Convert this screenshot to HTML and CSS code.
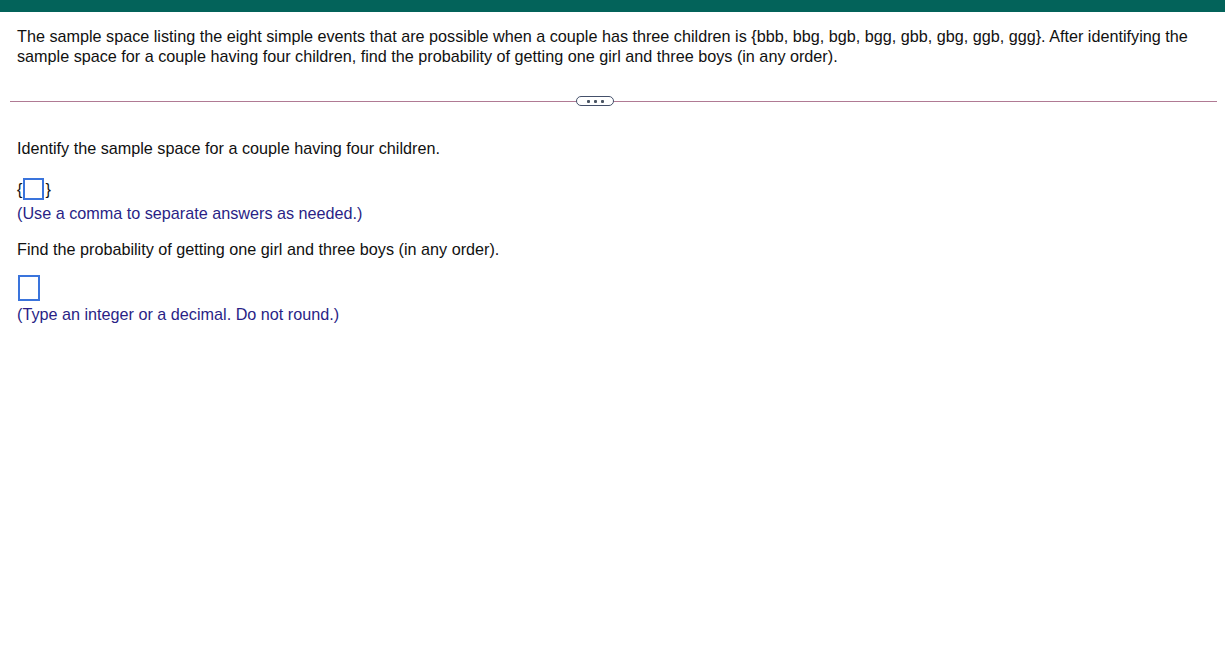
FILE: index.html
```html
<!DOCTYPE html>
<html>
<head>
<meta charset="utf-8">
<link rel="stylesheet" href="styles.css">
</head>
<body>
<div class="topbar"></div>
<div class="question">
  <p class="stem">The sample space listing the eight simple events that are possible when a couple has three children is {bbb, bbg, bgb, bgg, gbb, gbg, ggb, ggg}. After identifying the sample space for a couple having four children, find the probability of getting one girl and three boys (in any order).</p>
</div>
<div class="divider">
  <span class="pill"><span class="dot"></span><span class="dot"></span><span class="dot"></span></span>
</div>
<div class="parts">
  <p class="prompt">Identify the sample space for a couple having four children.</p>
  <div class="answer-row"><span class="brace">{</span><span class="box box-small"></span><span class="brace">}</span></div>
  <p class="hint">(Use a comma to separate answers as needed.)</p>
  <p class="prompt prompt-2">Find the probability of getting one girl and three boys (in any order).</p>
  <div class="answer-row answer-row-2"><span class="box box-tall"></span></div>
  <p class="hint">(Type an integer or a decimal. Do not round.)</p>
</div>
</body>
</html>
```

FILE: styles.css
```css
html, body {
  margin: 0;
  padding: 0;
  background: #ffffff;
}
body {
  font-family: "Liberation Sans", Arial, sans-serif;
  font-size: 16.2px;
  line-height: 20px;
  color: #111111;
}
p { margin: 0; }
.topbar {
  height: 12px;
  background: #03635a;
}
.question {
  padding: 14px 17px 0 17px;
}
.divider {
  position: relative;
  margin: 35px 8px 0 10px;
  height: 1px;
  background: #b07a94;
}
.pill {
  position: absolute;
  left: 566px;
  top: -5px;
  width: 36px;
  height: 8px;
  border: 1.5px solid #44506a;
  border-radius: 6px;
  background: #ffffff;
  display: flex;
  align-items: center;
  justify-content: center;
  gap: 4px;
}
.dot {
  width: 3px;
  height: 3px;
  background: #4a5563;
  border-radius: 1px;
}
.parts {
  padding: 36px 17px 0 17px;
}
.answer-row {
  margin-top: 20px;
  display: flex;
  align-items: center;
  height: 22px;
}
.brace {
  color: #111111;
  line-height: 20px;
}
.box {
  display: inline-block;
  box-sizing: border-box;
  border: 2px solid #3a74dc;
  background: #ffffff;
}
.box-small {
  width: 21px;
  height: 22px;
  margin: 0 1px;
}
.hint {
  margin-top: 3px;
  color: #2a1f86;
}
.prompt-2 {
  margin-top: 16px;
}
.answer-row-2 {
  margin-top: 16px;
  height: 26px;
}
.box-tall {
  width: 22px;
  height: 26px;
  margin-left: 1px;
}
```
